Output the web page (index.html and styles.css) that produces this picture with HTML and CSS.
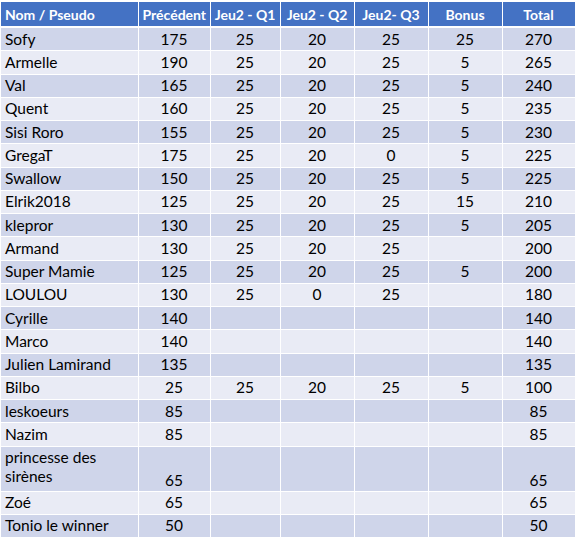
FILE: index.html
```html
<!DOCTYPE html>
<html lang="fr">
<head>
<meta charset="utf-8">
<link rel="stylesheet" href="styles.css">
</head>
<body>
<table class="scores">
  <colgroup>
    <col class="c-name"><col class="c-prev"><col class="c-q1"><col class="c-q2"><col class="c-q3"><col class="c-bonus"><col class="c-total">
  </colgroup>
  <thead>
    <tr><th class="name">Nom / Pseudo</th><th>Précédent</th><th>Jeu2 - Q1</th><th>Jeu2 - Q2</th><th>Jeu2- Q3</th><th>Bonus</th><th>Total</th></tr>
  </thead>
  <tbody>
    <tr><td class="name">Sofy</td><td>175</td><td>25</td><td>20</td><td>25</td><td>25</td><td>270</td></tr>
    <tr><td class="name">Armelle</td><td>190</td><td>25</td><td>20</td><td>25</td><td>5</td><td>265</td></tr>
    <tr><td class="name">Val</td><td>165</td><td>25</td><td>20</td><td>25</td><td>5</td><td>240</td></tr>
    <tr><td class="name">Quent</td><td>160</td><td>25</td><td>20</td><td>25</td><td>5</td><td>235</td></tr>
    <tr><td class="name">Sisi Roro</td><td>155</td><td>25</td><td>20</td><td>25</td><td>5</td><td>230</td></tr>
    <tr><td class="name">GregaT</td><td>175</td><td>25</td><td>20</td><td>0</td><td>5</td><td>225</td></tr>
    <tr><td class="name">Swallow</td><td>150</td><td>25</td><td>20</td><td>25</td><td>5</td><td>225</td></tr>
    <tr><td class="name">Elrik2018</td><td>125</td><td>25</td><td>20</td><td>25</td><td>15</td><td>210</td></tr>
    <tr><td class="name">klepror</td><td>130</td><td>25</td><td>20</td><td>25</td><td>5</td><td>205</td></tr>
    <tr><td class="name">Armand</td><td>130</td><td>25</td><td>20</td><td>25</td><td></td><td>200</td></tr>
    <tr><td class="name">Super Mamie</td><td>125</td><td>25</td><td>20</td><td>25</td><td>5</td><td>200</td></tr>
    <tr><td class="name">LOULOU</td><td>130</td><td>25</td><td>0</td><td>25</td><td></td><td>180</td></tr>
    <tr><td class="name">Cyrille</td><td>140</td><td></td><td></td><td></td><td></td><td>140</td></tr>
    <tr><td class="name">Marco</td><td>140</td><td></td><td></td><td></td><td></td><td>140</td></tr>
    <tr><td class="name">Julien Lamirand</td><td>135</td><td></td><td></td><td></td><td></td><td>135</td></tr>
    <tr><td class="name">Bilbo</td><td>25</td><td>25</td><td>20</td><td>25</td><td>5</td><td>100</td></tr>
    <tr><td class="name">leskoeurs</td><td>85</td><td></td><td></td><td></td><td></td><td>85</td></tr>
    <tr><td class="name">Nazim</td><td>85</td><td></td><td></td><td></td><td></td><td>85</td></tr>
    <tr class="tall"><td class="name">princesse des sirènes</td><td>65</td><td></td><td></td><td></td><td></td><td>65</td></tr>
    <tr><td class="name">Zoé</td><td>65</td><td></td><td></td><td></td><td></td><td>65</td></tr>
    <tr><td class="name">Tonio le winner</td><td>50</td><td></td><td></td><td></td><td></td><td>50</td></tr>
  </tbody>
</table>
</body>
</html>
```

FILE: styles.css
```css
html, body {
  margin: 0;
  padding: 0;
  background: #ffffff;
}

body {
  padding: 2px 0 0 1px;
  font-family: Lato, "Liberation Sans", sans-serif;
  color: #000000;
}

.scores {
  border-collapse: collapse;
  table-layout: fixed;
  width: 574px;
  font-size: 15.5px;
}

.c-name { width: 137px; }
.c-prev { width: 72px; }
.c-q1 { width: 70px; }
.c-q2 { width: 74px; }
.c-q3 { width: 74px; }
.c-bonus { width: 74px; }
.c-total { width: 73px; }

.scores th,
.scores td {
  border: 1px solid #ffffff;
  padding: 0 4px;
  text-align: center;
  vertical-align: middle;
  line-height: 19px;
  white-space: normal;
}

.scores th {
  background: #4472c4;
  color: #ffffff;
  font-weight: 700;
  font-size: 14px;
  height: 24px;
  border-bottom-width: 2px;
  border-top: 0;
}

.scores th:first-child,
.scores td:first-child {
  border-left: 0;
}

.scores .name {
  text-align: left;
  padding-left: 4px;
}

.scores td {
  height: 22.25px;
}

.scores tbody tr:nth-child(odd) td {
  background: #cfd5ea;
}

.scores tbody tr:nth-child(even) td {
  background: #e9ebf5;
}

.scores tr.tall td {
  height: 43px;
  vertical-align: bottom;
  padding-bottom: 1px;
}

.scores tr.tall td.name {
  vertical-align: top;
  padding-top: 1px;
  padding-bottom: 0;
}
```
